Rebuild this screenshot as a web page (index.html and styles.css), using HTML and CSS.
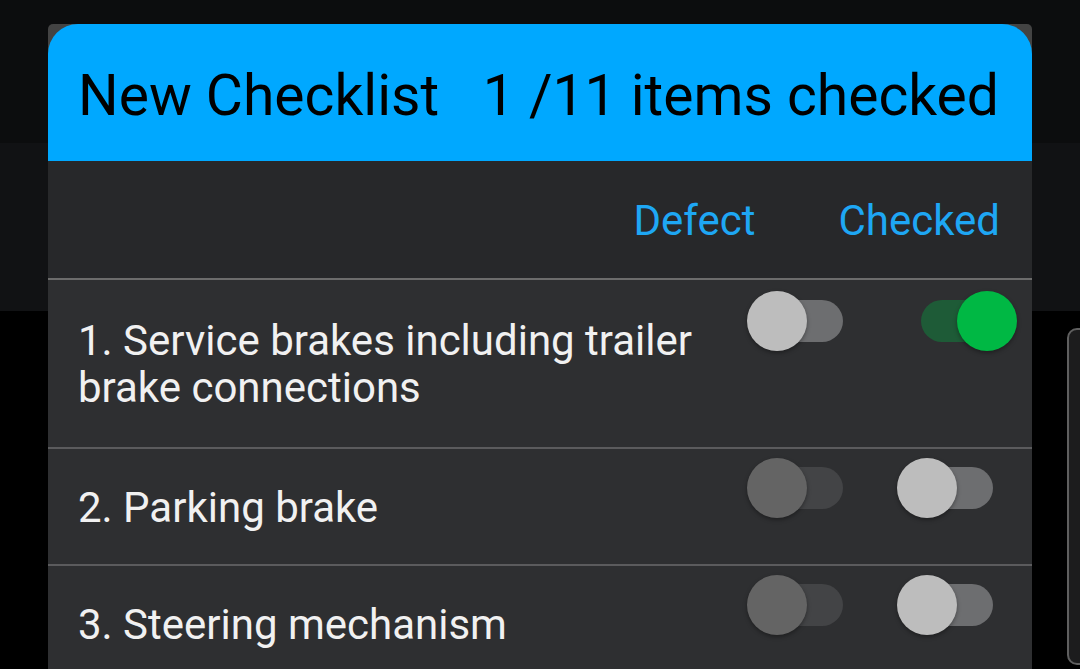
FILE: index.html
```html
<!DOCTYPE html>
<html lang="en">
<head>
  <meta charset="UTF-8" />
  <meta name="viewport" content="width=device-width, initial-scale=1.0"/>
  <title>New Checklist</title>
  <link rel="stylesheet" href="styles.css">
</head>
<body>
  <div class="backdrop">
    <div class="band band-top"></div>
    <div class="band band-mid"></div>
    <div class="side-card"></div>
  </div>

  <div class="dialog">
    <header class="dialog-header">
      <h1 class="title">New Checklist</h1>
      <span class="count">1 /11 items checked</span>
    </header>

    <div class="columns">
      <span>Defect</span>
      <span>Checked</span>
    </div>

    <div class="item item-tall">
      <div class="item-text">1. Service brakes including trailer<br>brake connections</div>
      <div class="switches">
        <div class="switch"><span class="track"></span><span class="thumb"></span></div>
        <div class="switch on"><span class="track"></span><span class="thumb"></span></div>
      </div>
    </div>

    <div class="item">
      <div class="item-text">2. Parking brake</div>
      <div class="switches">
        <div class="switch disabled"><span class="track"></span><span class="thumb"></span></div>
        <div class="switch"><span class="track"></span><span class="thumb"></span></div>
      </div>
    </div>

    <div class="item">
      <div class="item-text">3. Steering mechanism</div>
      <div class="switches">
        <div class="switch disabled"><span class="track"></span><span class="thumb"></span></div>
        <div class="switch"><span class="track"></span><span class="thumb"></span></div>
      </div>
    </div>
  </div>
</body>
</html>
```

FILE: styles.css
```css
* {
  margin: 0;
  padding: 0;
  box-sizing: border-box;
}

body {
  width: 1080px;
  height: 669px;
  overflow: hidden;
  background: #000;
  font-family: Roboto, "Noto Sans", sans-serif;
  position: relative;
}

/* what sits behind the dialog */
.backdrop {
  position: absolute;
  inset: 0;
}

.band-top {
  height: 143px;
  background: #0c0d0e;
}

.band-mid {
  height: 168px;
  background: #111214;
}

.side-card {
  position: absolute;
  left: 1067px;
  top: 328px;
  width: 40px;
  height: 337px;
  border: 2px solid #5f5f5f;
  border-radius: 10px;
  background: #1c1c1d;
}

.dialog {
  position: relative;
  margin: 24px 0 0 48px;
  width: 984px;
  background: #434343;
  border-radius: 5px 5px 0 0;
  overflow: hidden;
}

.dialog-header {
  height: 137px;
  padding: 38px 33px 0 30px;
  background: #00a8ff;
  border-radius: 30px 30px 0 0;
  display: flex;
  justify-content: space-between;
  color: #000;
  font-size: 57px;
  line-height: normal;
}

.title {
  font-size: inherit;
  font-weight: 400;
}

.columns {
  height: 119px;
  padding: 35px 32px 0 0;
  background: #27282a;
  border-bottom: 2px solid #6c6c6c;
  display: flex;
  justify-content: flex-end;
  gap: 83px;
  color: #1ea7f4;
  font-size: 42px;
}

.item {
  display: flex;
  align-items: flex-start;
  background: #2e2f31;
  border-bottom: 2px solid #5b5b5d;
}

.item-text {
  flex: 1;
  padding: 35px 0 33px 30px;
  color: #f1f1f1;
  font-size: 42px;
  line-height: 47px;
}

.item-tall .item-text {
  padding: 37px 0 36px 30px;
}

.switches {
  display: flex;
  gap: 30px;
  padding: 9px 15px 0 0;
}

.item-tall .switches {
  padding-top: 11px;
}

.switch {
  position: relative;
  width: 120px;
  height: 60px;
}

.switch .track {
  position: absolute;
  left: 24px;
  top: 9px;
  width: 72px;
  height: 42px;
  border-radius: 21px;
  background: #6d6e70;
}

.switch .thumb {
  position: absolute;
  left: 0;
  top: 0;
  width: 60px;
  height: 60px;
  border-radius: 50%;
  background: #bdbdbd;
  box-shadow: 0 2px 4px rgba(0, 0, 0, 0.35);
}

.switch.on .track {
  background: #1e5b37;
}

.switch.on .thumb {
  left: 60px;
  background: #00b844;
}

.switch.disabled .track {
  background: #434446;
}

.switch.disabled .thumb {
  background: #646464;
}
```
